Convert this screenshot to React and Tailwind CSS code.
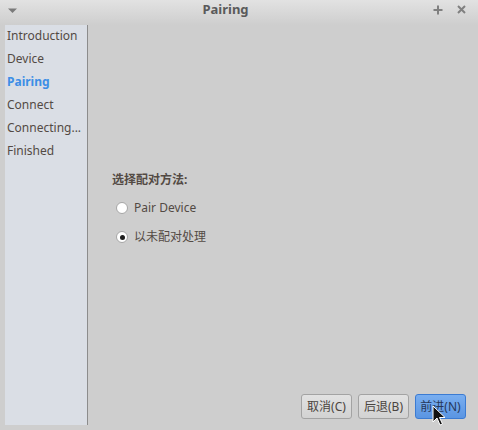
const steps = ["Introduction", "Device", "Pairing", "Connect", "Connecting...", "Finished"];

function Radio({ checked }) {
  return (
    <span className="flex h-[12px] w-[12px] items-center justify-center rounded-full border border-[#a6a6a6] bg-white">
      {checked && <span className="h-[5px] w-[5px] rounded-full bg-[#1e1e1e]" />}
    </span>
  );
}

function Button({ label, primary }) {
  return (
    <button
      className={
        primary
          ? "h-[25px] w-[51px] rounded-[3px] border border-[#3b7bd2] bg-gradient-to-b from-[#79aef0] to-[#5a95e2] text-[12px] text-[#27385a]"
          : "h-[25px] w-[51px] rounded-[3px] border border-[#a3a3a3] bg-gradient-to-b from-[#e2e2e2] to-[#d2d2d2] text-[12px] text-[#4a4440]"
      }
    >
      {label}
    </button>
  );
}

export default function App() {
  return (
    <div
      className="relative flex h-[430px] w-[478px] flex-col bg-[#cecece] text-[12px] text-[#534a44]"
      style={{ fontFamily: '"Noto Sans", "Noto Sans CJK SC", sans-serif' }}
    >
      {/* Title bar */}
      <div className="flex h-[25px] items-center bg-gradient-to-b from-[#e2e2e2] to-[#cecece] px-[7px]">
        <svg width="11" height="6" viewBox="0 0 11 6" className="mt-[-4px]">
          <path d="M1 0.5 L10 0.5 L5.5 5 Z" fill="#7a7a7a" />
        </svg>
        <div className="flex-1 pb-[5px] text-center text-[13px] font-bold text-[#5a5a5a]">Pairing</div>
        <div className="flex items-center gap-[14px] pb-[6px] pr-[5px]">
          <svg width="10" height="10" viewBox="0 0 10 10">
            <path d="M5 0.5 V9.5 M0.5 5 H9.5" stroke="#808080" strokeWidth="2" />
          </svg>
          <svg width="9" height="9" viewBox="0 0 9 9">
            <path d="M1 1 L8 8 M8 1 L1 8" stroke="#808080" strokeWidth="2" />
          </svg>
        </div>
      </div>

      <div className="flex flex-1 pb-[5px] pl-[5px]">
        {/* Sidebar */}
        <div className="flex w-[83px] flex-col border-r border-[#8c8c8c] bg-[#dadee5] pl-[2px] pt-[1px]">
          {steps.map((s) => (
            <div
              key={s}
              className={
                s === "Pairing"
                  ? "h-[23px] leading-[20px] font-bold text-[#3d8ee6] whitespace-nowrap"
                  : "h-[23px] leading-[20px] whitespace-nowrap"
              }
            >
              {s}
            </div>
          ))}
        </div>

        {/* Content */}
        <div className="flex flex-1 flex-col">
          <div className="flex flex-1 flex-col justify-center pl-[24px] pt-[3px]">
            <div className="mb-[5px] font-bold">选择配对方法:</div>
            <label className="flex h-[29px] items-center gap-[6px] pl-[4px]">
              <Radio />
              <span>Pair Device</span>
            </label>
            <label className="flex h-[29px] items-center gap-[6px] pl-[4px]">
              <Radio checked />
              <span>以未配对处理</span>
            </label>
          </div>
          <div className="flex justify-end gap-[6px] pb-[6px] pr-[12px]">
            <Button label="取消(C)" />
            <Button label="后退(B)" />
            <Button label="前进(N)" primary />
          </div>
        </div>
      </div>

      {/* mouse pointer */}
      <svg className="absolute left-[432px] top-[405px]" width="14" height="22" viewBox="0 0 14 22">
        <path d="M1 1 L1 17 L5 13 L8 20 L10.5 19 L7.5 12.5 L13 12.5 Z" fill="#111" stroke="#fff" strokeWidth="1" />
      </svg>
    </div>
  );
}
